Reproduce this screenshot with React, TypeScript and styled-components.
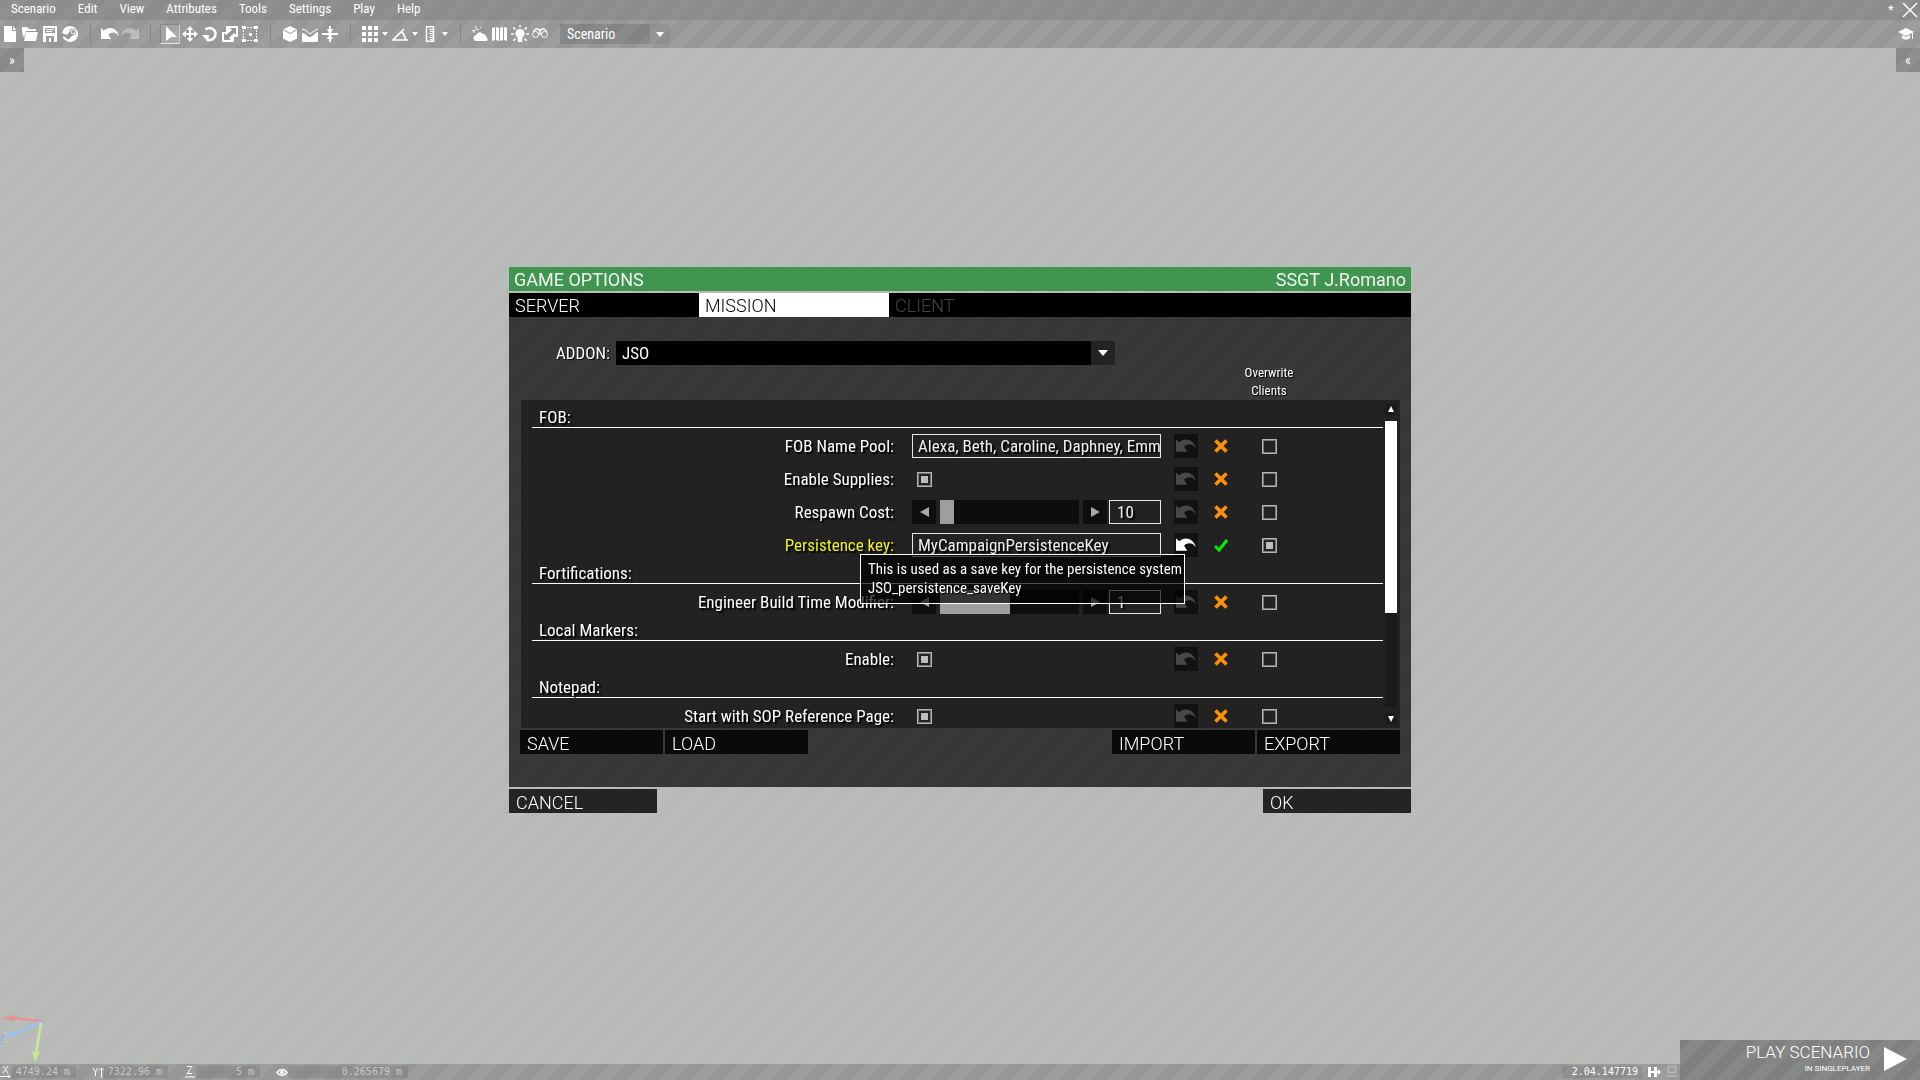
import React, { useState } from "react";
import styled, { createGlobalStyle, css } from "styled-components";

const condensed = `"Roboto Condensed", "Liberation Sans Narrow", Roboto, sans-serif`;
const display = `Roboto, "Open Sans", sans-serif`;
const mono = `"DejaVu Sans Mono", "Liberation Mono", monospace`;

const stripes = (dark: string, light: string) => css`
  background-image: linear-gradient(
    135deg,
    ${dark} 18%,
    ${light} 18% 43%,
    ${dark} 43% 68%,
    ${light} 68% 93%,
    ${dark} 93%
  );
  background-size: 32px 32px;
  background-attachment: fixed;
`;

const GlobalStyle = createGlobalStyle`
  *, *::before, *::after { box-sizing: border-box; }
  body { margin: 0; background: #b9bbb8; overflow: hidden; }
  button, input, select { margin: 0; padding: 0; border: 0; border-radius: 0; font: inherit; color: inherit; background: none; outline: none; }
  svg { display: block; flex: none; }
`;

const Editor = styled.div`
  min-height: 100vh;
  display: flex;
  flex-direction: column;
  color: #fff;
  font: 13px/20px ${condensed};
  ${stripes("#b7b9b6", "#bbbdba")}
`;

const MenuBar = styled.nav`
  height: 20px;
  display: flex;
  align-items: center;
  ${stripes("#8b8b8b", "#909090")}
`;

const MenuItem = styled.button`
  padding: 0 11px;
  height: 20px;
  line-height: 17px;
  padding-bottom: 3px;
`;

const Spacer = styled.div`
  flex: 1;
`;

const Unsaved = styled.span`
  width: 12px;
  line-height: 20px;
`;

const IconButton = styled.button<{ $active?: boolean; $dim?: boolean }>`
  width: 20px;
  height: 20px;
  display: grid;
  place-items: center;
  opacity: ${(p) => (p.$dim ? 0.35 : 1)};
  ${(p) =>
    p.$active &&
    css`
      background: rgba(255, 255, 255, 0.12);
      border: 1px solid;
      border-color: #868686 #d0d0d0 #e4e4e4 #868686;
    `}
`;

const ToolBar = styled.div`
  height: 28px;
  padding-right: 4px;
  display: flex;
  align-items: center;
  ${stripes("#979797", "#9d9d9d")}
`;

const Separator = styled.span`
  width: 1px;
  height: 20px;
  margin: 0 9px 0 10px;
  background: #868686;
`;

const CaretButton = styled.button`
  width: 10px;
  height: 20px;
  display: grid;
  place-items: center;
`;

const ModeSelect = styled.label`
  margin-left: 10px;
  display: grid;
  grid-template-columns: 90px 20px;
  align-items: center;
  justify-items: center;
  background: rgba(0, 0, 0, 0.05);

  select {
    grid-area: 1 / 1;
    width: 90px;
    height: 20px;
    padding: 0 7px;
    appearance: none;
    font-size: 14px;
    background: rgba(0, 0, 0, 0.08);
  }
`;

const Viewport = styled.main`
  flex: 1;
  display: flex;
  justify-content: space-between;
  align-items: flex-start;
`;

const PanelToggle = styled.button`
  width: 24px;
  height: 24px;
  font-size: 14px;
  line-height: 24px;
  ${stripes("#888988", "#8e8f8e")}
`;

const Gizmo = styled.svg`
  position: absolute;
  left: 0;
  bottom: 16px;
`;

const BottomRow = styled.footer`
  display: flex;
  align-items: flex-end;
`;

const StatusBar = styled.div`
  flex: 1;
  height: 16px;
  display: flex;
  align-items: center;
  gap: 16px;
  font: 10px/12px ${mono};
  ${stripes("#979797", "#9d9d9d")}
`;

const Readout = styled.div<{ $wide?: boolean }>`
  display: flex;
  align-items: center;

  output {
    width: ${(p) => (p.$wide ? 120 : 64)}px;
    height: 12px;
    padding-right: 6px;
    text-align: right;
    color: #c8c8c8;
    background: rgba(0, 0, 0, 0.08);
  }
`;

const Version = styled.span`
  width: 80px;
  height: 12px;
  padding-right: 4px;
  text-align: right;
  background: rgba(0, 0, 0, 0.08);
`;

const StatusIcons = styled.div`
  display: flex;
  gap: 2px;
  margin-left: -12px;
`;

const PlayButton = styled.button`
  width: 240px;
  height: 40px;
  padding: 0 13px 2px 0;
  display: flex;
  align-items: center;
  justify-content: flex-end;
  gap: 14px;
  text-align: right;
  ${stripes("#808080", "#878787")}
`;

const PlayTitle = styled.span`
  display: block;
  font: 300 17px/20px ${display};
`;

const PlayMode = styled.span`
  display: block;
  font: 400 8px/14px ${display};
`;

const Overlay = styled.div`
  position: fixed;
  inset: 0;
  display: flex;
  align-items: center;
  justify-content: center;
`;

const Dialog = styled.section`
  width: 902px;
  display: flex;
  flex-direction: column;
  gap: 2px;
`;

const TitleBar = styled.header`
  height: 24px;
  padding: 0 5px;
  display: flex;
  justify-content: space-between;
  font: 400 18px/25px ${display};
  color: #f2f6f2;
  ${stripes("#3f944f", "#409650")}

  h1 {
    margin: 0;
    font: inherit;
  }
`;

const Tabs = styled.div`
  display: flex;
  background: #000;
`;

const Tab = styled.button<{ $selected?: boolean }>`
  width: 190px;
  height: 24px;
  padding: 0 6px;
  text-align: left;
  font: 300 18px/25px ${display};
  color: ${(p) => (p.$selected ? "#000" : "#fff")};
  background: ${(p) => (p.$selected ? "#fff" : "#000")};

  &:disabled {
    color: #444;
  }
`;

const Body = styled.div`
  padding: 24px 11px 33px;
  ${stripes("#373737", "#393939")}
`;

const AddonRow = styled.div`
  display: flex;
  align-items: center;
  padding-left: 36px;
  font-size: 17px;
  line-height: 24px;
`;

const AddonLabel = styled.label`
  width: 60px;
  text-shadow: 1px 1px 1px #000;
`;

const AddonSelect = styled.div`
  display: grid;
  grid-template-columns: 475px 24px;
  align-items: center;
  justify-items: center;
  background: #222422;

  select {
    width: 475px;
    height: 24px;
    padding: 0 6px;
    appearance: none;
    background: #000;
  }
`;

const ColumnHead = styled.div`
  width: 60px;
  margin: -1px 101px 0 auto;
  text-align: center;
  font-size: 13px;
  line-height: 18px;
  text-shadow: 1px 1px 1px #000;
`;

const ListPanel = styled.div`
  display: grid;
  grid-template-columns: 1fr 12px;
  gap: 2px;
  height: 328px;
  margin-left: 1px;
  padding: 0 3px 0 11px;
  background: #222;
`;

const Scroller = styled.div`
  padding-top: 1px;
  overflow: hidden;
`;

const SectionTitle = styled.h2`
  height: 27px;
  margin: 0 0 6px;
  padding: 7px 7px 0;
  border-bottom: 1px solid #fff;
  font: 400 17px/19px ${condensed};
  text-shadow: 2px 2px 1px #000;
`;

const Rows = styled.div`
  display: grid;
  gap: 9px;
`;

const RowAnchor = styled.div`
  position: relative;
`;

const Row = styled.div`
  height: 24px;
  display: grid;
  grid-template-columns: 380px 262px 24px 46px 1fr;
  align-items: center;
  font-size: 17px;
  line-height: 24px;
`;

const RowLabel = styled.label<{ $changed?: boolean }>`
  padding-right: 18px;
  text-align: right;
  color: ${(p) => (p.$changed ? "#f0f01a" : "#fff")};
  text-shadow: 2px 2px 1px #000;
`;

const Control = styled.div`
  width: 249px;
  height: 24px;
  display: flex;
  align-items: center;
`;

const TextBox = styled.input<{ $short?: boolean }>`
  width: ${(p) => (p.$short ? "52px" : "249px")};
  height: 24px;
  margin-left: ${(p) => (p.$short ? "2px" : "0")};
  padding-left: ${(p) => (p.$short ? "7px" : "5px")};
  border: 1px solid #e8e8e8;
  color: #eee;
  text-shadow: 2px 2px 1px #000;
`;

const Check = styled.input`
  appearance: none;
  width: 15px;
  height: 15px;
  border: 1px solid #b4b4b4;
  box-shadow: inset 0 0 0 1px #777;
  display: grid;
  place-items: center;

  &:checked::after {
    content: "";
    width: 7px;
    height: 7px;
    background: #bdbdbd;
  }
`;

const ControlCheck = styled(Check)`
  margin-left: 5px;
`;

const OverwriteCheck = styled(Check)`
  margin-left: 18px;
`;

const MarkCell = styled.span`
  display: grid;
  place-items: center;
`;

const DarkButton = styled.button`
  width: 24px;
  height: 24px;
  display: grid;
  place-items: center;
  background: #0e0e0e;
  color: #a8a8a8;
`;

const ResetButton = styled(DarkButton)<{ $live?: boolean }>`
  color: ${(p) => (p.$live ? "#fff" : "#484848")};
  background: #111;
`;

const Range = styled.input<{ $thumb: number }>`
  appearance: none;
  width: 139px;
  height: 24px;
  margin: 0 4px;
  background: #0d0d0d;

  &::-webkit-slider-thumb {
    appearance: none;
    width: ${(p) => p.$thumb}px;
    height: 24px;
    background: #9e9e9e;
  }
`;

const Scrollbar = styled.div`
  display: flex;
  flex-direction: column;
  padding: 3px 0;
  gap: 6px;
`;

const ScrollButton = styled.button`
  height: 12px;
  display: grid;
  place-items: center;
  background: #1a1a1a;
`;

const ScrollTrack = styled.div`
  flex: 1;
  background: #1a1a1a;
`;

const ScrollThumb = styled.div`
  height: 67%;
  background: #fff;
`;

const Actions = styled.div`
  display: flex;
  gap: 2px;
  margin-top: 2px;
`;

const ActionButton = styled.button<{ $wide?: boolean }>`
  width: ${(p) => (p.$wide ? 148 : 143)}px;
  height: 24px;
  padding: 0 7px;
  text-align: left;
  font: 300 18px/27px ${display};
  background: ${(p) => (p.$wide ? "#232423" : "#0a0a0a")};
`;

const DialogFooter = styled.footer`
  display: flex;
  justify-content: space-between;
`;

const Tooltip = styled.div`
  position: absolute;
  top: 21px;
  left: 328px;
  z-index: 1;
  width: 325px;
  padding: 5px 7px;
  border: 1px solid #fff;
  background: rgba(0, 0, 0, 0.68);
  font-size: 15px;
  line-height: 19px;
  white-space: nowrap;
  text-shadow: 1px 1px 1px #000;
`;

const Icon = ({ children, size = 16 }: { children: React.ReactNode; size?: number }) => (
  <svg width={size} height={size} viewBox="0 0 16 16" fill="currentColor" aria-hidden="true">
    {children}
  </svg>
);

const stroke = { fill: "none", stroke: "currentColor" };

const NewIcon = () => <Icon><path d="M2 0h8v5h4v11H2zM11 0l3 4h-3z" /></Icon>;
const OpenIcon = () => <Icon><path d="M0 1h5l2 2h7v2H4L2 12 0 6zM4 6h12l-2 9H2z" /></Icon>;
const SaveIcon = () => (
  <Icon><path fillRule="evenodd" d="M1 0h14v16H1zM3 2v5h10V2zM4 10v6h3v-4h2v4h3v-6z" /><path d="M4 3h8v1H4zM4 5h6v1H4z" /></Icon>
);
const SteamIcon = () => (
  <Icon>
    <path d="M8 0a8 8 0 1 1-7.600 10.300l3.400 1.300a2.400 2.400 0 0 0 4.600-.4l2.600-2a3.300 3.300 0 1 0-3.400-3.600L5.700 8.600a2.400 2.400 0 0 0-1.400.2L0 7.200A8 8 0 0 1 8 0z" />
    <circle cx="11" cy="5.800" r="2.100" {...stroke} strokeWidth="1" />
  </Icon>
);
const UndoIcon = ({ size = 18 }: { size?: number }) => (
  <Icon size={size}><path d="M0 2.500l2.500 2.500C6.500 1 14 2 16 10 13.500 6 9.500 5.500 6.500 8.500L9 12.500H0z" /></Icon>
);
const RedoIcon = () => (
  <Icon size={18}><path d="M16 2.500l-2.500 2.500C9.500 1 2 2 0 10 2.500 6 6.500 5.500 9.500 8.500L7 12.500h9z" /></Icon>
);
const PointerIcon = () => <Icon><path d="M4 0l11 11H9l-5 4z" /></Icon>;
const MoveIcon = () => (
  <Icon><path d="M8 0l3.500 4H9v3h3V4.500L16 8l-4 3.500V9H9v3h2.500L8 16l-3.500-4H7V9H4v2.500L0 8l4-3.500V7h3V4H4.500z" /></Icon>
);
const RotateIcon = () => (
  <Icon><path d="M3.500 3.500A6 6 0 1 1 5 13.500" {...stroke} strokeWidth="2.600" /><path d="M0 9h7l-1 7z" /></Icon>
);
const ScaleIcon = () => (
  <Icon><path fillRule="evenodd" d="M4 0h12v11h-4v5H0V6h4zM8 2l2 2-6 5-2-2v7h7l-2-2 5-5 2 2V2z" /></Icon>
);
const AreaIcon = () => (
  <Icon>
    <path d="M0 0h4v3H0zM12 0h4v3h-4zM0 13h4v3H0zM12 13h4v3h-4zM7 7h3v3H7z" />
    <path d="M5 1.500h7M5 14.500h7M1.500 4v9M14.500 4v9" {...stroke} strokeDasharray="2 1" />
  </Icon>
);
const CubeIcon = () => (
  <Icon><path d="M8 0l7 3.500v9L8 16l-7-3.500v-9z" /><path d="M1.500 4L8 7.500 14.500 4" fill="none" stroke="#999" /></Icon>
);
const TerrainIcon = () => (
  <Icon><path d="M0 7c4 0 5 4 8 4s4-4 8-5v10H0z" /><path d="M0 3l3 1 5 4 4-3 4-2" {...stroke} /></Icon>
);
const SurfaceIcon = () => <Icon><path d="M7 0h2v3h2L9 7h7v2H9l2 4H9v3H7v-3H5l2-4H0V7h7L5 3h2z" /></Icon>;
const GridIcon = () => (
  <Icon><path d="M0 0h4v4H0zM6 0h4v4H6zM12 0h4v4h-4zM0 6h4v4H0zM6 6h4v4H6zM12 6h4v4h-4zM0 12h4v4H0zM6 12h4v4H6zM12 12h4v4h-4z" /></Icon>
);
const AngleIcon = () => (
  <Icon><path d="M12 3L1 14h15M9 5.500c3 2 4 5 4.500 8" {...stroke} strokeWidth="1.600" /></Icon>
);
const RulerIcon = () => (
  <Icon><path d="M4.500 .7h7v14.600h-7z" {...stroke} strokeWidth="1.500" /><path d="M7 3h4v1H7zM8 5h3v1H8zM7 7h4v1H7zM8 9h3v1H8zM7 11h4v1H7zM8 13h3v1H8z" /></Icon>
);
const WeatherIcon = () => (
  <Icon><path d="M5 15a3 3 0 0 1-1-6 4 4 0 0 1 7-1 3 3 0 0 1 3 3 2.500 2.500 0 0 1 1 4z" /><path d="M2 7a3 3 0 0 1 5-3M4 0v2M0 4l2 1M8 2l1-1" {...stroke} /></Icon>
);
const MapIcon = () => <Icon><path d="M0 2l3-1v13l-3 1zM4 1l3 1v13l-3-1zM8 2l3-1v13l-3 1zM12 1l3 1v13l-3-1z" /></Icon>;
const LightIcon = () => (
  <Icon size={18}><path d="M8 3.500a4 4 0 0 1 2 7.500v4H6v-4a4 4 0 0 1 2-7.500z" /><path d="M8 0v2M0 8h2.500M13.500 8H16M2 2l2 2M14 2l-2 2M2 14l2-2M14 14l-2-2" {...stroke} strokeWidth="1.400" /></Icon>
);
const BinocularsIcon = () => (
  <Icon>
    <circle cx="3.500" cy="8.500" r="3" {...stroke} />
    <circle cx="12.500" cy="8.500" r="3" {...stroke} />
    <path d="M1 5.500L4 3h2l1 1h2l1-1h2l3 2.500M8 4v3M6.500 8h3" {...stroke} strokeWidth="1.400" />
  </Icon>
);
const CapIcon = () => (
  <Icon><path d="M8 2l8 4-8 4-8-4zM4 9l4 2 4-2v3c-2 2-6 2-8 0zM14 7h1v6h-1z" /></Icon>
);
const CloseIcon = () => <Icon><path d="M1 1l14 14M15 1L1 15" {...stroke} strokeWidth="1.500" /></Icon>;

const Triangle = ({ dir, w, h }: { dir: "up" | "down" | "left" | "right"; w: number; h: number }) => {
  const shape = {
    up: `M0 ${h}h${w}L${w / 2} 0z`,
    down: `M0 0h${w}L${w / 2} ${h}z`,
    left: `M${w} 0v${h}L0 ${h / 2}z`,
    right: `M0 0v${h}L${w} ${h / 2}z`,
  }[dir];
  return (
    <svg width={w} height={h} fill="currentColor" aria-hidden="true">
      <path d={shape} />
    </svg>
  );
};

const MarkIcon = ({ ok }: { ok?: boolean }) => (
  <svg width="14" height="14" viewBox="0 0 14 14" fill="none" aria-hidden="true">
    {ok ? (
      <path d="M1 8l4 4L13 2" stroke="#00f000" strokeWidth="3" />
    ) : (
      <path d="M1.500 1.500l11 11M12.500 1.500l-11 11" stroke="#ff9200" strokeWidth="3.600" />
    )}
  </svg>
);

const menus = ["Scenario", "Edit", "View", "Attributes", "Tools", "Settings", "Play", "Help"];

type Setting = {
  id: string;
  label: string;
  kind: "text" | "check" | "slider";
  value?: string;
  thumb?: number;
  changed?: boolean;
};

const sections: { title: string; settings: Setting[] }[] = [
  {
    title: "FOB:",
    settings: [
      { id: "names", label: "FOB Name Pool:", kind: "text", value: "Alexa, Beth, Caroline, Daphney, Emma" },
      { id: "supplies", label: "Enable Supplies:", kind: "check" },
      { id: "respawn", label: "Respawn Cost:", kind: "slider", value: "10", thumb: 14 },
      { id: "key", label: "Persistence key:", kind: "text", value: "MyCampaignPersistenceKey", changed: true },
    ],
  },
  {
    title: "Fortifications:",
    settings: [{ id: "build", label: "Engineer Build Time Modifier:", kind: "slider", value: "1", thumb: 70 }],
  },
  { title: "Local Markers:", settings: [{ id: "markers", label: "Enable:", kind: "check" }] },
  { title: "Notepad:", settings: [{ id: "sop", label: "Start with SOP Reference Page:", kind: "check" }] },
];

const SettingRow = ({ item }: { item: Setting }) => {
  const [value, setValue] = useState(item.value ?? "");
  return (
    <Row>
      <RowLabel htmlFor={item.id} $changed={item.changed}>{item.label}</RowLabel>
      <Control>
        {item.kind === "text" && <TextBox id={item.id} value={value} onChange={(e) => setValue(e.target.value)} />}
        {item.kind === "check" && <ControlCheck id={item.id} type="checkbox" defaultChecked />}
        {item.kind === "slider" && (
          <>
            <DarkButton aria-label="Decrease"><Triangle dir="left" w={9} h={10} /></DarkButton>
            <Range type="range" defaultValue={0} aria-label={item.label} $thumb={item.thumb ?? 14} />
            <DarkButton aria-label="Increase"><Triangle dir="right" w={9} h={10} /></DarkButton>
            <TextBox id={item.id} $short value={value} onChange={(e) => setValue(e.target.value)} />
          </>
        )}
      </Control>
      <ResetButton $live={item.changed} aria-label="Reset to default"><UndoIcon size={20} /></ResetButton>
      <MarkCell><MarkIcon ok={item.changed} /></MarkCell>
      <OverwriteCheck type="checkbox" defaultChecked={item.changed} aria-label="Overwrite clients" />
    </Row>
  );
};

export default function App() {
  return (
    <Editor>
      <GlobalStyle />
      <MenuBar>
        {menus.map((m) => <MenuItem key={m}>{m}</MenuItem>)}
        <Spacer />
        <Unsaved>*</Unsaved>
        <IconButton aria-label="Close"><CloseIcon /></IconButton>
      </MenuBar>
      <ToolBar>
        <IconButton aria-label="New"><NewIcon /></IconButton>
        <IconButton aria-label="Open"><OpenIcon /></IconButton>
        <IconButton aria-label="Save"><SaveIcon /></IconButton>
        <IconButton aria-label="Publish"><SteamIcon /></IconButton>
        <Separator />
        <IconButton aria-label="Undo"><UndoIcon /></IconButton>
        <IconButton aria-label="Redo" $dim><RedoIcon /></IconButton>
        <Separator />
        <IconButton aria-label="Select" $active><PointerIcon /></IconButton>
        <IconButton aria-label="Move"><MoveIcon /></IconButton>
        <IconButton aria-label="Rotate"><RotateIcon /></IconButton>
        <IconButton aria-label="Scale"><ScaleIcon /></IconButton>
        <IconButton aria-label="Area"><AreaIcon /></IconButton>
        <Separator />
        <IconButton aria-label="Objects"><CubeIcon /></IconButton>
        <IconButton aria-label="Terrain"><TerrainIcon /></IconButton>
        <IconButton aria-label="Surface snap"><SurfaceIcon /></IconButton>
        <Separator />
        <IconButton aria-label="Grid"><GridIcon /></IconButton>
        <CaretButton aria-label="Grid step"><Triangle dir="down" w={6} h={4} /></CaretButton>
        <IconButton aria-label="Angle"><AngleIcon /></IconButton>
        <CaretButton aria-label="Angle step"><Triangle dir="down" w={6} h={4} /></CaretButton>
        <IconButton aria-label="Ruler"><RulerIcon /></IconButton>
        <CaretButton aria-label="Ruler step"><Triangle dir="down" w={6} h={4} /></CaretButton>
        <Separator />
        <IconButton aria-label="Weather"><WeatherIcon /></IconButton>
        <IconButton aria-label="Map"><MapIcon /></IconButton>
        <IconButton aria-label="Lights"><LightIcon /></IconButton>
        <IconButton aria-label="Vision"><BinocularsIcon /></IconButton>
        <ModeSelect>
          <select aria-label="Mode"><option>Scenario</option></select>
          <Triangle dir="down" w={8} h={5} />
        </ModeSelect>
        <Spacer />
        <IconButton aria-label="Tutorials"><CapIcon /></IconButton>
      </ToolBar>

      <Viewport>
        <PanelToggle aria-label="Show left panel">»</PanelToggle>
        <PanelToggle aria-label="Show right panel">«</PanelToggle>
      </Viewport>

      <Gizmo width="48" height="56" viewBox="0 0 48 56" aria-hidden="true">
        <g strokeWidth="2.600">
          <path d="M41 13L12 10" stroke="#e8948a" /><path d="M2 10l13-3-1 6z" fill="#e8948a" />
          <path d="M41 14L14 26" stroke="#9cc0f8" /><path d="M4 30l9-7 3 5z" fill="#9cc0f8" />
          <path d="M41 15L36 46" stroke="#c8ea98" /><path d="M35 54l-3-11 8 1z" fill="#c8ea98" />
        </g>
        <g fontFamily="Roboto, sans-serif" fontSize="13">
          <text x="-7" y="13" fill="#d8847c">X</text>
          <text x="-3" y="36" fill="#88aeea">Z</text>
          <text x="31" y="63" fill="#a4c470">Y</text>
        </g>
      </Gizmo>

      <BottomRow>
        <StatusBar>
          <Readout>
            <svg width="12" height="12" fill="none" stroke="#fff"><path d="M3 0l5 7M8 0L3 7M0 10.500h10M8 8.500l2 2-2 2" /></svg>
            <output>4749.24 m</output>
          </Readout>
          <Readout>
            <svg width="12" height="12" fill="none" stroke="#fff"><path d="M1 2l2.500 4L6 2M3.500 6v4M9.500 12V2M7.500 4l2-2 2 2" /></svg>
            <output>7322.96 m</output>
          </Readout>
          <Readout>
            <svg width="12" height="12" fill="none" stroke="#fff"><path d="M3 .5h5L3 7.500h5M1 11.500l2-1 2 1 2-1 2 1 2-1" /></svg>
            <output>5 m</output>
          </Readout>
          <Readout $wide>
            <svg width="12" height="12" fill="none" stroke="#fff"><path d="M1 6.500c3-4 7-4 10 0-3 4-7 4-10 0z" strokeWidth="1.500" /><circle cx="6" cy="6.500" r="1.500" fill="#fff" /></svg>
            <output>0.265679 m</output>
          </Readout>
          <Spacer />
          <Version>2.04.147719</Version>
          <StatusIcons>
            <svg width="18" height="12" fill="#fff"><path d="M2 1h3v4h3V1h3v4h1V3l3 3-3 3V7h-1v4H8V7H5v4H2z" /></svg>
            <svg width="14" height="12" fill="none" stroke="#bbb"><path d="M2.500 .5h7v6h-7zM1 10h10" strokeWidth="1.400" /></svg>
          </StatusIcons>
        </StatusBar>
        <PlayButton>
          <span>
            <PlayTitle>PLAY SCENARIO</PlayTitle>
            <PlayMode>IN SINGLEPLAYER</PlayMode>
          </span>
          <Triangle dir="right" w={23} h={24} />
        </PlayButton>
      </BottomRow>

      <Overlay>
        <Dialog role="dialog" aria-labelledby="title">
          <TitleBar>
            <h1 id="title">GAME OPTIONS</h1>
            <span>SSGT J.Romano</span>
          </TitleBar>
          <div>
            <Tabs role="tablist">
              <Tab role="tab" aria-selected={false}>SERVER</Tab>
              <Tab role="tab" aria-selected $selected>MISSION</Tab>
              <Tab role="tab" aria-selected={false} disabled>CLIENT</Tab>
            </Tabs>
            <Body>
              <AddonRow>
                <AddonLabel htmlFor="addon">ADDON:</AddonLabel>
                <AddonSelect>
                  <select id="addon"><option>JSO</option></select>
                  <Triangle dir="down" w={10} h={6} />
                </AddonSelect>
              </AddonRow>
              <ColumnHead>Overwrite Clients</ColumnHead>
              <ListPanel>
                <Scroller>
                  {sections.map((s) => (
                    <section key={s.title}>
                      <SectionTitle>{s.title}</SectionTitle>
                      <Rows>
                        {s.settings.map((item) => (
                          <RowAnchor key={item.id}>
                            <SettingRow item={item} />
                            {item.changed && (
                              <Tooltip role="tooltip">
                                This is used as a save key for the persistence system
                                <br />
                                JSO_persistence_saveKey
                              </Tooltip>
                            )}
                          </RowAnchor>
                        ))}
                      </Rows>
                    </section>
                  ))}
                </Scroller>
                <Scrollbar>
                  <ScrollButton aria-label="Scroll up"><Triangle dir="up" w={6} h={6} /></ScrollButton>
                  <ScrollTrack><ScrollThumb /></ScrollTrack>
                  <ScrollButton aria-label="Scroll down"><Triangle dir="down" w={6} h={6} /></ScrollButton>
                </Scrollbar>
              </ListPanel>
              <Actions>
                <ActionButton>SAVE</ActionButton>
                <ActionButton>LOAD</ActionButton>
                <Spacer />
                <ActionButton>IMPORT</ActionButton>
                <ActionButton>EXPORT</ActionButton>
              </Actions>
            </Body>
          </div>
          <DialogFooter>
            <ActionButton $wide>CANCEL</ActionButton>
            <ActionButton $wide>OK</ActionButton>
          </DialogFooter>
        </Dialog>
      </Overlay>
    </Editor>
  );
}
